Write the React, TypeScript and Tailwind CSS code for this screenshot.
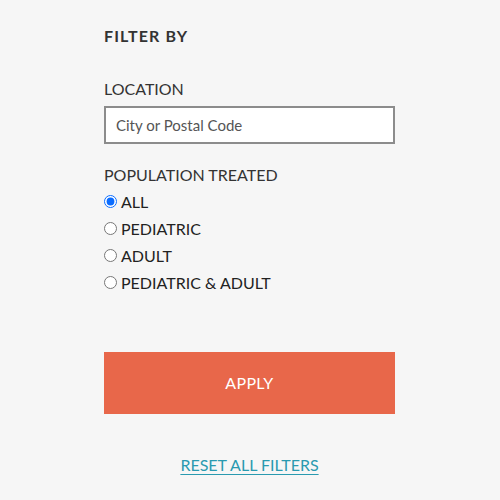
import React from "react";

const options = ["ALL", "PEDIATRIC", "ADULT", "PEDIATRIC & ADULT"];

export default function App() {
  return (
    <div
      className="w-[500px] h-[500px] bg-[#f6f6f6] text-[#2b2b2b] overflow-hidden"
      style={{ fontFamily: "Lato, 'Noto Sans', sans-serif" }}
    >
      <div className="ml-[104px] w-[291px] pt-[26px] flex flex-col">
        <h2 className="text-[16px] leading-[20px] font-bold tracking-[0.07em] text-[#333]">FILTER BY</h2>
        <label className="mt-[33px] text-[16px] leading-[20px] text-[#333]">LOCATION</label>
        <input
          className="mt-[7px] h-[38px] w-full border-2 border-[#8c8c8c] bg-white px-[10px] text-[15px] text-[#444] placeholder:text-[#555] outline-none"
          placeholder="City or Postal Code"
        />
        <div className="mt-[21px] text-[16px] leading-[20px] text-[#333]">POPULATION TREATED</div>
        <div className="mt-[3px] flex flex-col">
          {options.map((o, i) => (
            <label key={o} className="flex items-center h-[27px] text-[16px] text-[#222]">
              <input
                type="radio"
                name="pop"
                defaultChecked={i === 0}
                className="m-0 mr-[4px] w-[13px] h-[13px] accent-[#0a6cff]"
              />
              {o}
            </label>
          ))}
        </div>
        <button className="mt-[56px] h-[62px] w-full bg-[#e8674a] text-white text-[16px] tracking-[0.02em]">
          APPLY
        </button>
        <a href="#" className="mt-[39px] self-center text-[16px] text-[#2a9ab0] underline underline-offset-[3px]">
          RESET ALL FILTERS
        </a>
      </div>
    </div>
  );
}
